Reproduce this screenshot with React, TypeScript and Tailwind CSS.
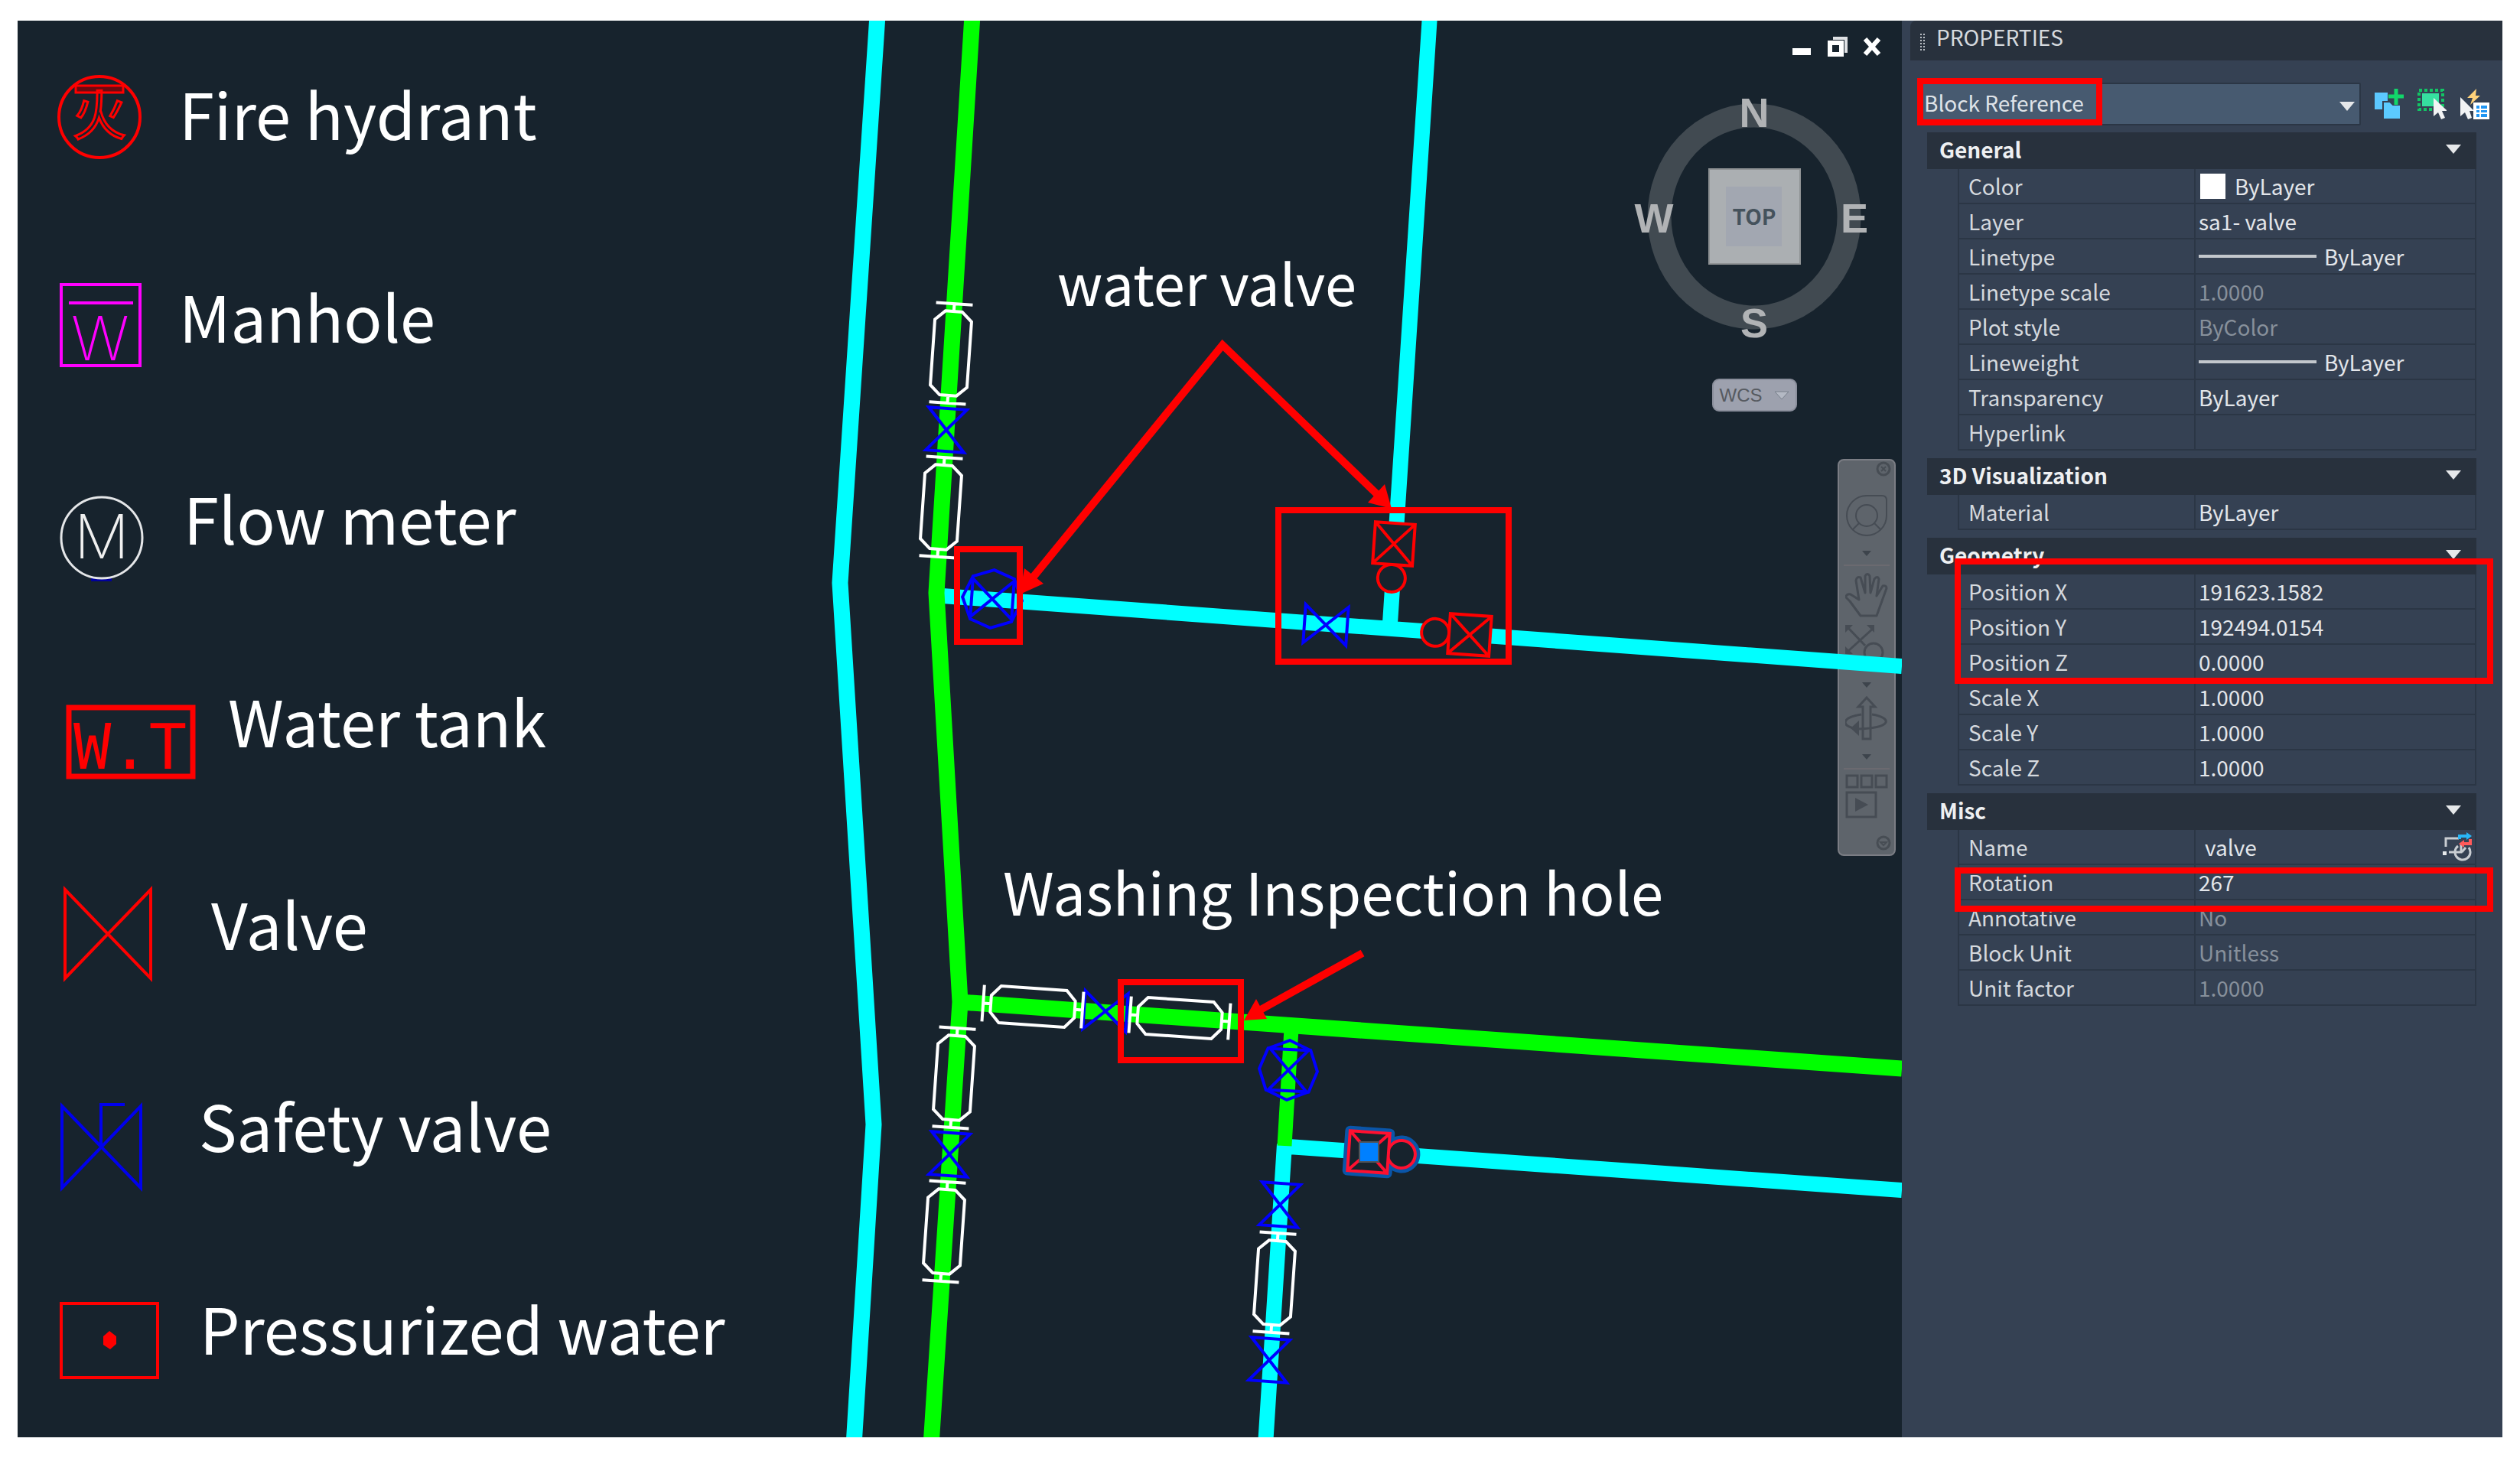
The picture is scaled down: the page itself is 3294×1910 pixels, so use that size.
import React from "react";

type Kind = "plain" | "muted" | "swatch" | "line";
type Row = { label: string; value: string; kind?: Kind; indent?: boolean; action?: boolean };

/* ---------- legend ---------- */

const legend: { label: string; gap: string; width: string; box: string; icon: React.ReactNode }[] = [
  {
    label: "Fire hydrant",
    gap: "gap-[48px]",
    width: "w-[108px]",
    box: "0 -96 108 180",
    icon: (
      <g fill="none" stroke="#ff0000" strokeWidth="3">
        <circle cx="52" cy="0" r="53" strokeWidth="4" />
        <rect x="21" y="-41" width="62" height="9" fill="#6b0a10" />
        <text x="52" y="24" textAnchor="middle" fontSize="70" fontFamily="Noto Sans CJK SC">火</text>
      </g>
    ),
  },
  {
    label: "Manhole",
    gap: "gap-[48px]",
    width: "w-[108px]",
    box: "0 -96 108 180",
    icon: (
      <g>
        <path d="M2-46h103v106H2zM12-22h84" fill="none" stroke="#ff00ff" strokeWidth="4" />
        <text x="53" y="53" textAnchor="middle" fontSize="80" fontWeight="200" fontFamily="Inter" fill="#ff00ff">W</text>
      </g>
    ),
  },
  {
    label: "Flow meter",
    gap: "gap-[52px]",
    width: "w-[110px]",
    box: "0 -96 110 180",
    icon: (
      <g>
        <path d="M41 76h27" stroke="#00009b" strokeWidth="4" />
        <circle cx="55" cy="21" r="53" fill="none" stroke="#e4e6e8" strokeWidth="3" />
        <text x="55" y="48" textAnchor="middle" fontSize="80" fontWeight="200" fontFamily="Inter" fill="#f0f0f0">M</text>
      </g>
    ),
  },
  {
    label: "Water tank",
    gap: "gap-[40px]",
    width: "w-[180px]",
    box: "0 -96 180 180",
    icon: (
      <g>
        <rect x="12" y="-22" width="162" height="90" fill="none" stroke="#ff0000" strokeWidth="7" />
        <text x="18" y="58" fontSize="82" fontFamily="DejaVu Sans Mono" fill="#ff0000">W.T</text>
      </g>
    ),
  },
  {
    label: "Valve",
    gap: "gap-[78px]",
    width: "w-[120px]",
    box: "0 -96 120 180",
    icon: <path d="M7-49L119 67V-49L7 67z" fill="none" stroke="#ff0000" strokeWidth="4" />,
  },
  {
    label: "Safety valve",
    gap: "gap-[74px]",
    width: "w-[108px]",
    box: "0 -96 108 180",
    icon: <path d="M3-30L106 77V-30L3 77zM54 24V-32H85" fill="none" stroke="#0000ee" strokeWidth="4" />,
  },
  {
    label: "Pressurized water",
    gap: "gap-[53px]",
    width: "w-[130px]",
    box: "0 -96 130 180",
    icon: (
      <g>
        <rect x="2" y="-37" width="126" height="97" fill="none" stroke="#ff0000" strokeWidth="4" />
        <path d="M65-1l9 7v10l-8 7-9-6V6z" fill="#ff0000" />
      </g>
    ),
  },
];

function Legend() {
  return (
    <ul className="grid w-[1057px] shrink-0 auto-rows-fr">
      {legend.map((item) => (
        <li key={item.label} className={`flex items-center pb-6 pl-[55px] ${item.gap}`}>
          <svg viewBox={item.box} className={`h-[180px] shrink-0 overflow-visible ${item.width}`} aria-hidden="true">
            {item.icon}
          </svg>
          <span className="text-[83px] leading-[120px] whitespace-nowrap text-white">{item.label}</span>
        </li>
      ))}
    </ul>
  );
}

/* ---------- drawing ---------- */

type Placed = { x: number; y: number; r?: number };
const at = ({ x, y, r = 0 }: Placed) => `translate(${x} ${y}) rotate(${r})`;

const InspectionHole = (p: Placed) => (
  <path
    transform={at(p)}
    d="M-24-65H24M-24 65H24M0-65V-55M0 65V55M-11-55H11L24-43V43L11 55H-11L-24 43V-43z"
    fill="none"
    stroke="#fff"
    strokeWidth="4"
  />
);

const BowTie = (p: Placed) => (
  <path transform={at(p)} d="M-25-28H25L-25 28H25z" fill="none" stroke="#0000ff" strokeWidth="4" />
);

const RingedValve = (p: Placed) => (
  <g transform={at(p)} fill="none" stroke="#0000ff" strokeWidth="4">
    <path d="M-38 0L-28-27L0-39L28-27L38 0L28 27L0 39L-28 27z" />
    <path d="M-25-27H25L-25 27H25z" />
  </g>
);

const HydrantValve = (p: Placed) => (
  <g transform={at(p)} fill="#17232d" stroke="#ff0000" strokeWidth="4">
    <circle cx="0" cy="45" r="18" />
    <path d="M-26-27H26V27H-26zL26 27M26-27L-26 27" />
  </g>
);

const inspectionHoles: Placed[] = [
  { x: 1243, y: 462, r: 4 },
  { x: 1230, y: 663, r: 4 },
  { x: 1247, y: 1409, r: 4 },
  { x: 1234, y: 1610, r: 4 },
  { x: 1666, y: 1677, r: 4 },
  { x: 1350, y: 1316, r: 94 },
  { x: 1542, y: 1331, r: 94 },
];

const bowTies: Placed[] = [
  { x: 1237, y: 562, r: 4 },
  { x: 1241, y: 1509, r: 4 },
  { x: 1673, y: 1575, r: 4 },
  { x: 1659, y: 1778, r: 4 },
  { x: 1445, y: 1322, r: 94 },
  { x: 1733, y: 817, r: 94 },
];

function Drawing() {
  return (
    <svg
      viewBox="1080 27 1406 1852"
      preserveAspectRatio="xMaxYMin slice"
      className="pointer-events-none absolute inset-0 size-full"
      role="img"
      aria-label="Water pipe network"
    >
      <g fill="none" strokeWidth="21" strokeLinejoin="round">
        <path d="M1147 20L1098 762L1142 1470L1116 1890" stroke="#00ffff" />
        <path d="M1232 779L2486 871M1869 20L1817 815M1684 1499L2486 1556M1679 1496L1654 1890" stroke="#00ffff" strokeWidth="20" />
        <path d="M1271 20L1224 775L1255 1310L1217 1890M1255 1310L2486 1397" stroke="#00ff00" />
        <path d="M1688 1345L1679 1498" stroke="#00ff00" strokeWidth="19" />
      </g>

      {bowTies.map((p) => <BowTie key={`${p.x}-${p.y}`} {...p} />)}
      {inspectionHoles.map((p) => <InspectionHole key={`${p.x}-${p.y}`} {...p} />)}
      <RingedValve x={1297} y={783} r={94} />
      <RingedValve x={1684} y={1399} r={3} />
      <HydrantValve x={1822} y={711} r={4} />
      <HydrantValve x={1921} y={830} r={94} />

      <g transform="translate(1789 1506) rotate(4)" fill="#17232d">
        <path d="M-26-26H26V26H-26z" stroke="#0a55a8" strokeWidth="13" strokeLinejoin="round" />
        <circle cx="43" cy="0" r="18" stroke="#0a55a8" strokeWidth="13" />
        <circle cx="43" cy="0" r="18" stroke="#ff1030" strokeWidth="4" />
        <path d="M-26-26H26V26H-26zL26 26M26-26L-26 26" stroke="#ff1030" strokeWidth="4" />
      </g>
      <rect x="1777" y="1493" width="25" height="26" fill="#0080ff" stroke="#50545a" strokeWidth="2" />

      <g fill="none" stroke="#ff0000" strokeWidth="8">
        <rect x="1251" y="718" width="82" height="121" />
        <rect x="1671" y="667" width="301" height="198" />
        <rect x="1465" y="1284" width="157" height="102" />
      </g>
      <path d="M1350 755L1598 451L1803 649M1781 1246L1646 1321" fill="none" stroke="#ff0000" strokeWidth="10" />
      <path
        d="M1333 777L1339 743L1364 763zM1819 665L1810 633L1788 657zM1626 1334L1642 1306L1656 1332z"
        fill="#ff0000"
      />

      <text x="1382" y="400" fontSize="74" fill="#fff">water valve</text>
      <text x="1311" y="1197" fontSize="76" fill="#fff">Washing Inspection hole</text>
    </svg>
  );
}

function WindowButtons() {
  return (
    <div className="absolute top-[17px] right-[24px] flex gap-[18px]">
      <button aria-label="Minimize">
        <svg viewBox="0 0 28 34" className="h-[34px] w-[28px]"><path d="M1 19h24v9H1z" fill="#fff" /></svg>
      </button>
      <button aria-label="Restore">
        <svg viewBox="0 0 28 34" className="h-[34px] w-[28px]">
          <path d="M8 6h17v19" fill="none" stroke="#dfe1e4" strokeWidth="4" />
          <rect x="4" y="12" width="15" height="15" fill="none" stroke="#fff" strokeWidth="6" />
        </svg>
      </button>
      <button aria-label="Close">
        <svg viewBox="0 0 28 34" className="h-[34px] w-[28px]">
          <path d="M4 7L22 27M22 7L4 27" stroke="#fff" strokeWidth="6" />
        </svg>
      </button>
    </div>
  );
}

function ViewCube() {
  return (
    <div className="absolute top-[95px] right-[33px] flex w-[320px] flex-col items-center gap-[43px]">
      <svg viewBox="2133 122 320 330" className="h-[330px] w-[320px] overflow-visible">
        <ellipse cx="2293" cy="283" rx="124" ry="132" fill="none" stroke="#414a51" strokeWidth="31" />
        <rect x="2234" y="221" width="119" height="124" fill="#abafb2" stroke="#8f9294" strokeWidth="2" />
        <rect x="2256" y="244" width="73" height="78" fill="#a2a7b1" />
        <text x="2293" y="294" textAnchor="middle" fontSize="28" fontWeight="700" fill="#45525c" fontFamily="Noto Sans CJK KR">TOP</text>
        <g textAnchor="middle" fontSize="54" fontWeight="700" fill="#b1b3b5" fontFamily="Liberation Sans">
          <text x="2293" y="166">N</text>
          <text x="2293" y="441">S</text>
          <text x="2162" y="304">W</text>
          <text x="2424" y="304">E</text>
        </g>
      </svg>
      <button className="flex h-[43px] w-[111px] items-center justify-between rounded-[9px] border-2 border-[#8b8f9c] bg-[#9da1ae] px-2 font-['Liberation_Sans',sans-serif] text-[24px] leading-none text-[#565a60]">
        WCS
        <svg viewBox="0 0 20 12" className="h-[12px] w-[20px]"><path d="M1 1h18l-9 10z" fill="#b4b9c4" stroke="#78808c" /></svg>
      </button>
    </div>
  );
}

const SmallTriangle = () => (
  <svg viewBox="0 0 12 8" className="h-[8px] w-[12px]"><path d="M0 0h12L6 7z" fill="#3d444c" /></svg>
);

function NavigationBar() {
  return (
    <nav
      aria-label="Navigation bar"
      className="absolute top-[573px] right-[8px] flex h-[519px] w-[76px] flex-col items-center rounded-[8px] border-2 border-[#7b7d84] bg-[#5e646b]"
    >
      <button aria-label="Close bar" className="mr-1 self-end">
        <svg viewBox="0 0 20 22" className="h-[22px] w-[20px]" fill="none" stroke="#474d54" strokeWidth="3">
          <circle cx="10" cy="11" r="8" /><path d="M7 8l6 6M13 8l-6 6" strokeWidth="2" />
        </svg>
      </button>
      <button aria-label="Steering wheel" className="mt-[22px] flex flex-col items-center gap-[18px]">
        <svg viewBox="0 0 56 56" className="size-[56px]" fill="none" stroke="#464c54" strokeWidth="2">
          <path d="M28 2h20q6 0 6 6v20a26 26 0 1 1-26-26z" /><circle cx="28" cy="28" r="14" />
          <path d="M18 38l-8 8M38 38l8 8" />
        </svg>
        <SmallTriangle />
      </button>
      <hr className="mt-2.5 w-[60px] border-t-2 border-[#6b6a70]" />
      <button aria-label="Pan" className="mt-[8px]">
        <svg viewBox="0 0 56 60" className="h-[60px] w-[56px]" fill="none" stroke="#464c54" strokeWidth="3" strokeLinejoin="round">
          <path d="M20 57L6 38 1 33q0-5 6-4l11 7-4-25q1-6 6-4l6 20V5q3-5 6 0l1 22 5-18q4-5 6 0l-3 22 8-13q5-1 5 3L41 57z" />
        </svg>
      </button>
      <button aria-label="Zoom" className="mt-[8px] flex flex-col items-center gap-[18px]">
        <svg viewBox="0 0 58 58" className="size-[58px]" fill="none" stroke="#464c54" strokeWidth="3">
          <path d="M5 5L27 28M5 35L38 5" />
          <path d="M1 1h10L1 11zM39 1v10L29 1zM1 39V29l10 10z" fill="#464c54" stroke="none" />
          <circle cx="38" cy="37" r="12" /><path d="M46 46l10 9" strokeWidth="6" />
        </svg>
        <SmallTriangle />
      </button>
      <button aria-label="Orbit" className="mt-[10px] flex flex-col items-center gap-[18px]">
        <svg viewBox="0 0 56 58" className="h-[58px] w-[56px]" fill="none" stroke="#464c54" strokeWidth="3">
          <path d="M23 56V14h-6L28 2l11 12h-6v42z" />
          <path d="M21 24C-6 28-6 40 16 43M35 24c26 4 28 18-19 19" />
          <path d="M18 32v20L7 42z" fill="#464c54" stroke="none" />
        </svg>
        <SmallTriangle />
      </button>
      <hr className="mt-2.5 w-[60px] border-t-2 border-[#6b6a70]" />
      <button aria-label="Show motion" className="mt-[5px]">
        <svg viewBox="0 0 56 60" className="h-[60px] w-[56px]" fill="none" stroke="#464c54" strokeWidth="3">
          <path d="M2 3h14v15H2zM21 3h14v15H21zM40 3h14v15H40zM2 25h38v32H2z" />
          <path d="M13 32v18l17-9z" fill="#464c54" stroke="none" />
        </svg>
      </button>
      <button aria-label="Bar menu" className="mt-auto mr-1 self-end">
        <svg viewBox="0 0 20 26" className="h-[26px] w-[20px]" fill="none" stroke="#474d54" strokeWidth="3">
          <circle cx="10" cy="11" r="8" /><path d="M6 10h8l-4 4z" strokeWidth="2" />
        </svg>
      </button>
    </nav>
  );
}

/* ---------- properties ---------- */

const sections: { title: string; rows: Row[]; mark?: string }[] = [
  {
    title: "General",
    rows: [
      { label: "Color", value: "ByLayer", kind: "swatch" },
      { label: "Layer", value: "sa1- valve" },
      { label: "Linetype", value: "ByLayer", kind: "line" },
      { label: "Linetype scale", value: "1.0000", kind: "muted" },
      { label: "Plot style", value: "ByColor", kind: "muted" },
      { label: "Lineweight", value: "ByLayer", kind: "line" },
      { label: "Transparency", value: "ByLayer" },
      { label: "Hyperlink", value: "" },
    ],
  },
  { title: "3D Visualization", rows: [{ label: "Material", value: "ByLayer" }] },
  {
    title: "Geometry",
    mark: "top-[27px] h-[164px]",
    rows: [
      { label: "Position X", value: "191623.1582" },
      { label: "Position Y", value: "192494.0154" },
      { label: "Position Z", value: "0.0000" },
      { label: "Scale X", value: "1.0000" },
      { label: "Scale Y", value: "1.0000" },
      { label: "Scale Z", value: "1.0000" },
    ],
  },
  {
    title: "Misc",
    mark: "top-[97px] h-[58px]",
    rows: [
      { label: "Name", value: "valve", indent: true, action: true },
      { label: "Rotation", value: "267" },
      { label: "Annotative", value: "No", kind: "muted" },
      { label: "Block Unit", value: "Unitless", kind: "muted" },
      { label: "Unit factor", value: "1.0000", kind: "muted" },
    ],
  },
];

const Triangle = ({ className = "" }: { className?: string }) => (
  <svg viewBox="0 0 20 12" className={`h-[12px] w-[20px] ${className}`} aria-hidden="true">
    <path d="M0 0h20L10 12z" fill="#e6e8ea" />
  </svg>
);

function Value({ row }: { row: Row }) {
  return (
    <div className={`flex items-center ${row.indent ? "pl-3" : "pl-1"} ${row.kind === "muted" ? "text-[#87909b]" : "text-[#e3e6ea]"}`}>
      {row.kind === "swatch" && <span className="mr-3 ml-0.5 size-[33px] bg-white" />}
      {row.kind === "line" && <span className="mr-2.5 h-[4px] w-[154px] bg-[#c3c7cc]" />}
      <span>{row.value}</span>
      {row.action && (
        <button aria-label="Edit block" className="mr-1 ml-auto">
          <svg viewBox="0 0 38 38" className="size-[38px]" fill="none" strokeWidth="3">
            <path d="M4 19V8h17M8 26h16v-12" stroke="#c9cdd2" />
            <path d="M0 25h5v5H0z" fill="#e6e8ea" />
            <path d="M20 18a10 10 0 1 0 14 2M25 26l5-6" stroke="#c9cdd2" />
            <path d="M22 9V5h10" stroke="#29b6f6" strokeWidth="4" /><path d="M31 0l7 5-7 5z" fill="#29b6f6" />
            <path d="M36 9v6H27" stroke="#ff5a5a" strokeWidth="4" /><path d="M28 10l-7 5 7 5z" fill="#ff5a5a" />
          </svg>
        </button>
      )}
    </div>
  );
}

function Properties() {
  return (
    <aside className="w-[785px] shrink-0 bg-[#354153] text-[28px] leading-[44px] text-[#d5d9de]">
      <header className="ml-[11px] flex h-[52px] items-center gap-[14px] rounded-tl-[8px] bg-[#28313d] pb-2.5 pl-[12px]">
        <svg viewBox="0 0 8 24" className="mt-4 h-[24px] w-[8px]" aria-hidden="true">
          <path d="M2 0v24M6 0v24" stroke="#b9bec4" strokeWidth="2" strokeDasharray="2 2" />
        </svg>
        <h2>PROPERTIES</h2>
      </header>

      <div className="mt-[29px] flex items-center gap-[18px] pr-[17px] pl-[20px]">
        <div className="relative flex-1">
          <select
            aria-label="Object type"
            className="h-[56px] w-full appearance-none rounded-[2px] border-2 border-[#2b3645] bg-[#475a70] pb-1 pl-[7px] text-[#dfe3e8]"
          >
            <option>Block Reference</option>
          </select>
          <Triangle className="pointer-events-none absolute top-[25px] right-[8px]" />
          <div className="pointer-events-none absolute -top-[6px] left-0 h-[62px] w-[242px] border-8 border-[#ff0000]" />
        </div>
        <button aria-label="Toggle PICKADD">
          <svg viewBox="0 0 38 40" className="h-[40px] w-[38px]">
            <path d="M0 5h17v22H0z" fill="#5cc8ff" />
            <path d="M11 17h9l4 4h10v19H11z" fill="#5ccbff" stroke="#354153" strokeWidth="2" />
            <path d="M28 0v21M18 10h20" stroke="#12d66a" strokeWidth="5" />
          </svg>
        </button>
        <button aria-label="Select objects">
          <svg viewBox="0 0 38 40" className="h-[40px] w-[38px]">
            <path d="M2 2h31v25H2z" fill="none" stroke="#12c465" strokeWidth="4" strokeDasharray="4 3" />
            <path d="M6 6h22v17H6z" fill="#36dfa0" />
            <path d="M21 12v24l6-5 4 9 5-2-4-9h7z" fill="#f2f3f4" />
          </svg>
        </button>
        <button aria-label="Quick select">
          <svg viewBox="0 0 38 40" className="h-[40px] w-[38px]">
            <path d="M21 0L9 12h7l-3 9 13-12h-6z" fill="#ffd27a" />
            <path d="M0 11v25l6-5 4 9 5-2-3-9h6z" fill="#f2f3f4" />
            <path d="M17 18h21v22H17z" fill="#fff" />
            <path d="M21 22h4v4h-4zM27 22h8v4h-8zM21 28h4v3h-4zM27 28h8v3h-8zM21 33h4v4h-4zM27 33h8v4h-8z" fill="#2196f3" />
          </svg>
        </button>
      </div>

      <div className="mt-[9px] mr-[34px] ml-[33px] flex flex-col gap-[10px]">
        {sections.map((section) => (
          <section key={section.title} className="relative">
            <button className="flex h-[48px] w-full items-center justify-between bg-[#28313d] pr-[20px] pb-1 pl-[16px] font-bold text-[#eef0f2]">
              {section.title}
              <Triangle />
            </button>
            <div className="pl-[40px]">
              <table className="w-full table-fixed border-separate border-spacing-0 border-l-2 border-[#2b3645]">
                <tbody>
                  {section.rows.map((row) => (
                    <tr key={row.label} className="h-[46px]">
                      <th scope="row" className="w-[309px] border-r-2 border-b-2 border-[#2b3645] p-0 pl-[12px] text-left font-normal">
                        {row.label}
                      </th>
                      <td className="border-r-2 border-b-2 border-[#2b3645] p-0"><Value row={row} /></td>
                    </tr>
                  ))}
                </tbody>
              </table>
            </div>
            {section.mark && (
              <div className={`pointer-events-none absolute -right-[22px] left-[36px] border-8 border-[#ff0000] ${section.mark}`} />
            )}
          </section>
        ))}
      </div>
    </aside>
  );
}

export default function App() {
  return (
    <div className="flex min-h-screen bg-white px-[23px] pt-[27px] pb-[31px] font-['Noto_Sans_CJK_KR','Noto_Sans',sans-serif]">
      <main className="flex flex-1 bg-[#17232d]">
        <Legend />
        <div className="relative min-w-0 flex-1 overflow-hidden">
          <NavigationBar />
          <ViewCube />
          <WindowButtons />
          <Drawing />
        </div>
        <Properties />
      </main>
    </div>
  );
}
